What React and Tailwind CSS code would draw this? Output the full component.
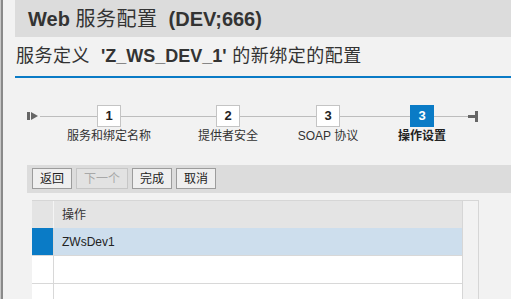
import React from "react";

const FONT = { fontFamily: '"Liberation Sans", "Noto Sans CJK SC", sans-serif' };

function Step({ n, label, active }) {
  return (
    <div className="w-[24px] flex flex-col items-center shrink-0">
      <div
        className={
          active
            ? "w-[24px] h-[22px] bg-[#0a7bc6] text-white flex items-center justify-center text-[13px] font-bold"
            : "w-[24px] h-[22px] bg-white border border-[#c4c4c4] text-[#222] flex items-center justify-center text-[13px] font-bold"
        }
      >
        {n}
      </div>
      <div
        className={
          "mt-[2px] whitespace-nowrap text-[12px] leading-[14px] " +
          (active ? "font-bold text-[#222]" : "text-[#333]")
        }
      >
        {label}
      </div>
    </div>
  );
}

function Line({ w }) {
  return <div className="h-px bg-[#bdbdbd] mt-[11px] shrink-0" style={{ width: w }} />;
}

function Btn({ children, w, disabled }) {
  return (
    <div
      className={
        "h-[21px] flex items-center justify-center text-[12px] shrink-0 " +
        (disabled
          ? "border border-[#c6c6c6] bg-[#e2e2e2] text-[#a8a8a8]"
          : "border border-[#9c9c9c] bg-[#efefef] text-[#222]")
      }
      style={{ width: w }}
    >
      {children}
    </div>
  );
}

export default function App() {
  return (
    <div
      className="w-[511px] h-[299px] overflow-hidden bg-[#f2f2f2] flex border-l border-[#c8c8c8]"
      style={FONT}
    >
      <div className="w-[2px] bg-[#8a8a8a] shrink-0" />
      <div className="w-[12px] shrink-0" />
      <div className="flex-1 flex flex-col min-w-0">
        <div className="h-[37px] shrink-0 bg-[#dcdcdc] flex items-center pl-[13px] text-[20px] text-[#333] font-bold whitespace-pre">
          <span>Web </span>
          <span className="font-normal tracking-[0.5px]">服务配置</span>
          <span>  (DEV;666)</span>
        </div>
        <div className="h-[39px] shrink-0 flex items-center pl-px text-[18px] text-[#333] whitespace-pre">
          <span className="tracking-[0.5px]">服务定义  </span>
          <span className="font-bold">'Z_WS_DEV_1'</span>
          <span className="tracking-[0.5px]"> 的新绑定的配置</span>
        </div>
        <div className="h-[2px] shrink-0 bg-[#0a7bc6]" />
        <div className="h-[87px] shrink-0 pt-[27px] pl-[12px] flex items-start">
          <svg width="13" height="22" viewBox="0 0 13 22" className="shrink-0">
            <rect x="0" y="7" width="3" height="8" fill="#666" />
            <polygon points="4,7 4,15 11,11" fill="#666" />
          </svg>
          <Line w={57} />
          <Step n="1" label="服务和绑定名称" />
          <Line w={95} />
          <Step n="2" label="提供者安全" />
          <Line w={76} />
          <Step n="3" label="SOAP 协议" />
          <Line w={70} />
          <Step n="3" label="操作设置" active />
          <Line w={34} />
          <svg width="11" height="22" viewBox="0 0 11 22" className="shrink-0">
            <rect x="0" y="10" width="8" height="3" fill="#666" />
            <rect x="7" y="6" width="3" height="11" fill="#666" />
          </svg>
        </div>
        <div className="ml-[12px] h-[28px] shrink-0 bg-[#dcdcdc] flex items-start pt-[3px] pl-[5px] gap-[4px]">
          <Btn w={40}>返回</Btn>
          <Btn w={52} disabled>下一个</Btn>
          <Btn w={40}>完成</Btn>
          <Btn w={40}>取消</Btn>
        </div>
        <div className="mt-[7px] ml-[17px] flex border-t border-[#d6d6d6] w-[447px] h-[120px] shrink-0">
          <div className="w-[430px] flex flex-col shrink-0">
            <div className="h-[27px] shrink-0 flex bg-[#e4e4e4]">
              <div className="w-[22px] border-r border-[#f4f4f4] shrink-0" />
              <div className="flex-1 flex items-center pl-[8px] text-[12px] text-[#333]">操作</div>
            </div>
            <div className="h-[28px] shrink-0 flex border-b border-[#d8d8d8]">
              <div className="w-[22px] bg-[#0a7bc6] border-r border-[#d8d8d8] shrink-0" />
              <div className="flex-1 flex items-center pl-[8px] text-[12px] text-[#222] bg-[#cddeed]">ZWsDev1</div>
            </div>
            <div className="h-[28px] shrink-0 flex border-b border-[#d8d8d8] bg-white">
              <div className="w-[22px] border-r border-[#d8d8d8] shrink-0" />
              <div className="flex-1" />
            </div>
            <div className="h-[28px] shrink-0 flex bg-white">
              <div className="w-[22px] border-r border-[#d8d8d8] shrink-0" />
              <div className="flex-1" />
            </div>
          </div>
          <div className="w-[17px] border-l border-r border-[#d6d6d6] bg-[#f2f2f2] shrink-0" />
        </div>
      </div>
    </div>
  );
}
